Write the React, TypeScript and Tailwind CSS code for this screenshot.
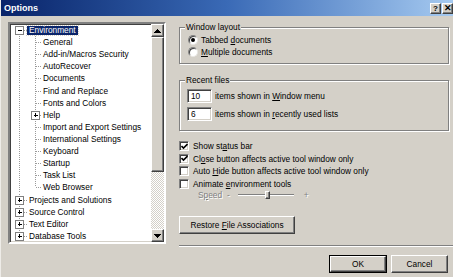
import React from "react";

const raised =
  "border border-t-white border-l-white border-b-[#404040] border-r-[#404040] shadow-[inset_-1px_-1px_0_#808080]";
const sunken =
  "border border-t-[#808080] border-l-[#808080] border-b-white border-r-white shadow-[inset_1px_1px_0_#404040,inset_-1px_-1px_0_#d4d0c8]";

type Row = { label: string; level: 0 | 1; box?: "plus" | "minus"; selected?: boolean; last?: boolean };

const rows: Row[] = [
  { label: "Environment", level: 0, box: "minus", selected: true },
  { label: "General", level: 1 },
  { label: "Add-in/Macros Security", level: 1 },
  { label: "AutoRecover", level: 1 },
  { label: "Documents", level: 1 },
  { label: "Find and Replace", level: 1 },
  { label: "Fonts and Colors", level: 1 },
  { label: "Help", level: 1, box: "plus" },
  { label: "Import and Export Settings", level: 1 },
  { label: "International Settings", level: 1 },
  { label: "Keyboard", level: 1 },
  { label: "Startup", level: 1 },
  { label: "Task List", level: 1 },
  { label: "Web Browser", level: 1, last: true },
  { label: "Projects and Solutions", level: 0, box: "plus" },
  { label: "Source Control", level: 0, box: "plus" },
  { label: "Text Editor", level: 0, box: "plus" },
  { label: "Database Tools", level: 0, box: "plus" },
];

const H = 12.12;
const C = 6;
const line = "#9a9a9a";

function Box({ x, kind }: { x: number; kind: "plus" | "minus" }) {
  return (
    <g>
      <rect x={x} y={C - 4} width={8} height={8} fill="#fff" stroke="#808080" strokeWidth={1} />
      <line x1={x + 2} y1={C} x2={x + 6} y2={C} stroke="#000" strokeWidth={1} />
      {kind === "plus" && <line x1={x + 4} y1={C - 2} x2={x + 4} y2={C + 2} stroke="#000" strokeWidth={1} />}
    </g>
  );
}

function Gutter({ row }: { row: Row }) {
  const w = row.level === 0 ? 16 : 30;
  return (
    <svg width={w} height={H} className="shrink-0 block" shapeRendering="crispEdges">
      {row.level === 0 ? (
        <>
          <line x1={8.5} y1={row.selected ? C : 0} x2={8.5} y2={H} stroke={line} strokeDasharray="1 1" />
          <line x1={12.5} y1={C + 0.5} x2={16} y2={C + 0.5} stroke={line} strokeDasharray="1 1" />
          {row.box && <Box x={4.5} kind={row.box} />}
        </>
      ) : (
        <>
          <line x1={8.5} y1={0} x2={8.5} y2={H} stroke={line} strokeDasharray="1 1" />
          <line x1={24.5} y1={0} x2={24.5} y2={row.last ? C : H} stroke={line} strokeDasharray="1 1" />
          <line x1={24.5} y1={C + 0.5} x2={30} y2={C + 0.5} stroke={line} strokeDasharray="1 1" />
          {row.box && <Box x={20.5} kind={row.box} />}
        </>
      )}
    </svg>
  );
}

function Arrow({ up }: { up: boolean }) {
  return (
    <svg width="7" height="4" viewBox="0 0 7 4" shapeRendering="crispEdges">
      {up ? <path d="M3.5 0 L7 4 L0 4 Z" fill="#000" /> : <path d="M0 0 L7 0 L3.5 4 Z" fill="#000" />}
    </svg>
  );
}

function U({ children }: { children: React.ReactNode }) {
  return <span className="underline underline-offset-[1px]">{children}</span>;
}

function Radio({ checked, children }: { checked?: boolean; children: React.ReactNode }) {
  return (
    <div className="h-[12px] flex items-center pl-[8px] gap-[3px]">
      <div className="w-[10px] h-[10px] rounded-full bg-white border border-t-[#808080] border-l-[#808080] border-b-[#e8e6e2] border-r-[#e8e6e2] flex items-center justify-center shadow-[inset_1px_1px_0_#404040]">
        {checked && <div className="w-[4px] h-[4px] rounded-full bg-black" />}
      </div>
      <span>{children}</span>
    </div>
  );
}

function Check({ checked, children }: { checked?: boolean; children: React.ReactNode }) {
  return (
    <div className="h-[12.5px] flex items-center gap-[4px]">
      <div className={`w-[10px] h-[10px] bg-white ${sunken} flex items-center justify-center`}>
        {checked && (
          <svg width="7" height="7" viewBox="0 0 7 7">
            <path d="M0.5 3 L2.5 5 L6.5 1" fill="none" stroke="#000" strokeWidth="1.6" />
          </svg>
        )}
      </div>
      <span>{children}</span>
    </div>
  );
}

export default function App() {
  return (
    <div
      className="w-[453px] h-[277px] bg-[#d4d0c8] overflow-hidden flex flex-col text-black text-[8.3px] leading-[10px] border-l border-l-[#eeece8]"
      style={{ fontFamily: '"Liberation Sans", Arial, sans-serif' }}
    >
      {/* Title bar */}
      <div className="h-[16px] shrink-0 flex items-center justify-between pl-[3px] bg-gradient-to-r from-[#0a246a] via-[#3a6ab6] to-[#a6caf0]">
        <span className="text-white font-bold text-[9px]">Options</span>
        <div className="flex gap-[1px] mt-[1px]">
          <div className={`w-[11px] h-[11px] bg-[#d4d0c8] ${raised} flex items-center justify-center text-[8px] font-bold leading-none`}>?</div>
          <div className={`w-[11px] h-[11px] bg-[#d4d0c8] ${raised} flex items-center justify-center text-[9px] font-bold leading-none`}>✕</div>
        </div>
      </div>

      {/* Body */}
      <div className="flex flex-1">
        {/* Tree */}
        <div className={`ml-[7px] mt-[6px] w-[158px] h-[222px] bg-white flex border-2 border-t-[#808080] border-l-[#808080] border-b-white border-r-white shadow-[inset_1px_1px_0_#404040,inset_-1px_-1px_0_#d4d0c8]`}>
          <div className="flex-1 pt-[0px] pl-[1px] overflow-hidden">
            {rows.map((r) => (
              <div key={r.label} className="flex items-center whitespace-nowrap" style={{ height: H }}>
                <Gutter row={r} />
                <span
                  className={
                    r.selected
                      ? "px-[2px] bg-[#0a246a] text-white outline outline-1 outline-dotted outline-[#d4d0c8] leading-[9px]"
                      : "px-[2px]"
                  }
                >
                  {r.label}
                </span>
              </div>
            ))}
          </div>
          <div className="w-[13px] flex flex-col shrink-0">
            <div className={`h-[13px] bg-[#d4d0c8] ${raised} flex items-center justify-center`}>
              <Arrow up />
            </div>
            <div className={`h-[135px] bg-[#d4d0c8] ${raised}`} />
            <div className="flex-1 bg-[repeating-conic-gradient(#d4d0c8_0_25%,#ffffff_0_50%)] bg-[length:2px_2px]" />
            <div className={`h-[13px] bg-[#d4d0c8] ${raised} flex items-center justify-center`}>
              <Arrow up={false} />
            </div>
          </div>
        </div>

        {/* Right pane */}
        <div className="ml-[13px] flex-1 flex flex-col">
          <div className="mt-[11px] w-[270px] h-[37px] border border-[#808080] shadow-[inset_1px_1px_0_#fff,1px_1px_0_#fff]">
            <div className="-mt-[6px] ml-[5px] px-[1px] w-fit bg-[#d4d0c8] leading-[10px]">Window layout</div>
            <div className="mt-[2px]">
              <Radio checked>
                Tabbed <U>d</U>ocuments
              </Radio>
              <Radio>
                <U>M</U>ultiple documents
              </Radio>
            </div>
          </div>

          <div className="mt-[16px] w-[270px] h-[51px] border border-[#808080] shadow-[inset_1px_1px_0_#fff,1px_1px_0_#fff]">
            <div className="-mt-[6px] ml-[5px] px-[1px] w-fit bg-[#d4d0c8] leading-[10px]">Recent files</div>
            <div className="mt-[4px] h-[14px] flex items-center pl-[7px] gap-[3px]">
              <div className={`w-[25px] h-[14px] bg-white ${sunken} pl-[3px] flex items-center`}>10</div>
              <span>
                items shown in <U>W</U>indow menu
              </span>
            </div>
            <div className="mt-[4px] h-[14px] flex items-center pl-[7px] gap-[3px]">
              <div className={`w-[25px] h-[14px] bg-white ${sunken} pl-[3px] flex items-center`}>6</div>
              <span>
                items shown in <U>r</U>ecently used lists
              </span>
            </div>
          </div>

          <div className="mt-[9px]">
            <Check checked>
              Show st<U>a</U>tus bar
            </Check>
            <Check checked>
              Cl<U>o</U>se button affects active tool window only
            </Check>
            <Check>
              Auto <U>H</U>ide button affects active tool window only
            </Check>
            <Check>
              Animate <U>e</U>nvironment tools
            </Check>
          </div>

          <div className="h-[10px] flex items-center pl-[19px] text-[#808080] [text-shadow:1px_1px_0_#fff]">
            <span>
              S<U>p</U>eed
            </span>
            <span className="ml-[5px]">-</span>
            <div className="ml-[8px] w-[56px] h-[10px] relative flex items-center">
              <div className="w-full h-[2px] border-t border-t-[#808080] border-b border-b-white" />
              <div className={`absolute left-[27px] top-[1px] w-[5px] h-[8px] bg-[#d4d0c8] ${raised}`} />
            </div>
            <span className="ml-[10px]">+</span>
          </div>

          <div className={`mt-[16px] w-[116px] h-[18px] bg-[#d4d0c8] ${raised} flex items-center justify-center`}>
            <span>
              Restore <U>F</U>ile Associations
            </span>
          </div>

          <div className="mt-[11px] h-[2px] border-t border-t-[#808080] border-b border-b-white" />

          <div className="mt-[8px] flex justify-end gap-[4px] pr-[5px]">
            <div className="w-[58px] h-[18px] border border-black">
              <div className={`w-full h-full bg-[#d4d0c8] ${raised} flex items-center justify-center`}>OK</div>
            </div>
            <div className={`w-[57px] h-[18px] bg-[#d4d0c8] ${raised} flex items-center justify-center`}>Cancel</div>
          </div>
        </div>
      </div>
    </div>
  );
}
